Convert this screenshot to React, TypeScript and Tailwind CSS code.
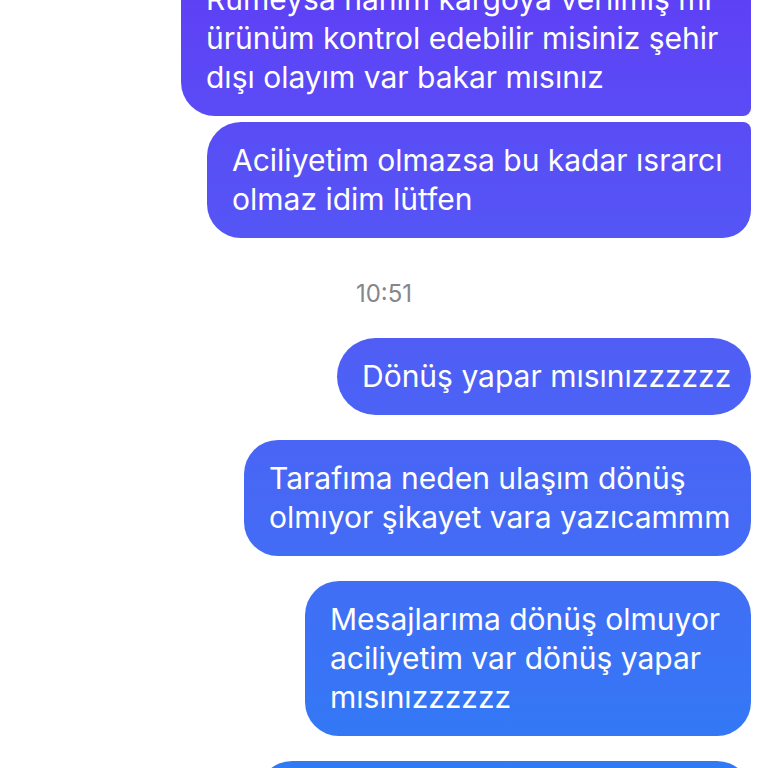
type Message = {
  text: string
  width: string
  corners: string
}

const topGroup: Message[] = [
  {
    text: 'Rumeysa hanım kargoya verilmiş mi ürünüm kontrol edebilir misiniz şehir dışı olayım var bakar mısınız',
    width: 'w-[570px]',
    corners: 'rounded-[34px] rounded-tr-[8px] rounded-br-[8px]',
  },
  {
    text: 'Aciliyetim olmazsa bu kadar ısrarcı olmaz idim lütfen',
    width: 'w-[544px]',
    corners: 'rounded-[34px] rounded-tr-[8px] rounded-br-[28px]',
  },
]

const bottomGroup: Message[] = [
  {
    text: 'Dönüş yapar mısınızzzzzz',
    width: 'w-[414px]',
    corners: 'rounded-[39px]',
  },
  {
    text: 'Tarafıma neden ulaşım dönüş olmıyor şikayet vara yazıcammm',
    width: 'w-[507px]',
    corners: 'rounded-[34px]',
  },
  {
    text: 'Mesajlarıma dönüş olmuyor aciliyetim var dönüş yapar mısınızzzzzz',
    width: 'w-[446px]',
    corners: 'rounded-[34px]',
  },
  {
    text: 'Lütfen bilgi verir misiniz kargom nerede',
    width: 'w-[493px]',
    corners: 'rounded-[34px]',
  },
]

function Bubble({ msg }: { msg: Message }) {
  return (
    <div
      className={`${msg.width} ${msg.corners} bg-linear-to-b from-[#5e41f5] to-[#2f7af5] bg-fixed py-[19px] pl-[25px] pr-[18px] text-[30px] leading-[39px] text-white`}
    >
      {msg.text}
    </div>
  )
}

export default function App() {
  return (
    <main
      className="h-[768px] overflow-hidden bg-white pr-[17px]"
      style={{ fontFamily: 'Inter, "Noto Sans", sans-serif' }}
    >
      <div className="-mt-[39px] flex flex-col items-end gap-[6px]">
        {topGroup.map((msg, i) => (
          <Bubble key={i} msg={msg} />
        ))}
      </div>

      <p className="mt-[40px] mb-[28px] pl-[17px] text-center text-[24px] leading-[32px] text-[#86868b]">
        10:51
      </p>

      <div className="flex flex-col items-end gap-[25px]">
        {bottomGroup.map((msg, i) => (
          <Bubble key={i} msg={msg} />
        ))}
      </div>
    </main>
  )
}
